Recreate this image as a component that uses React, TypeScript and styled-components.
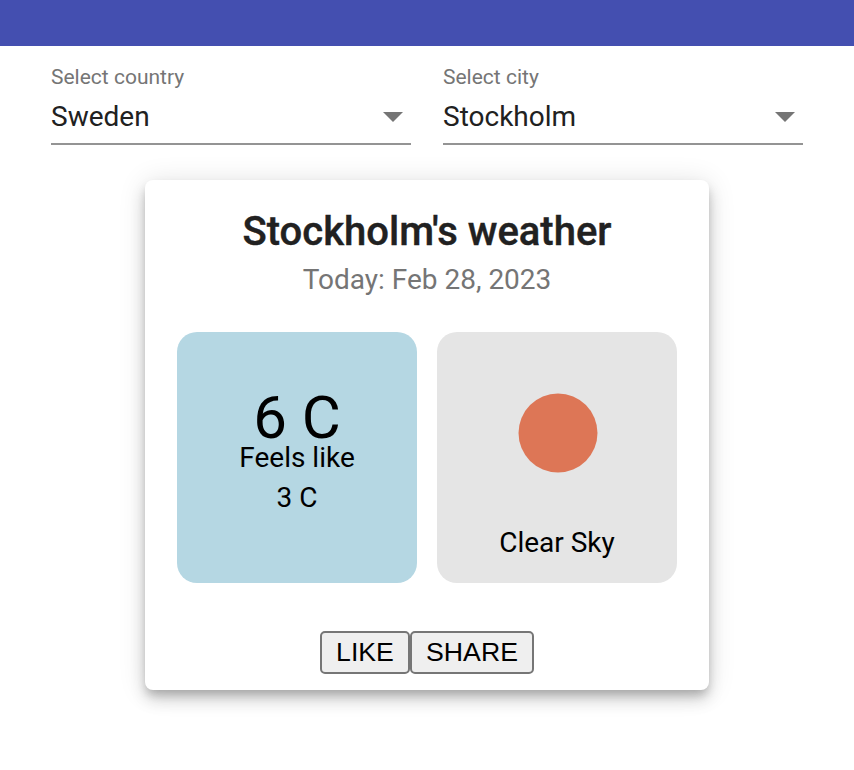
import React from "react";
import styled, { createGlobalStyle } from "styled-components";

const Global = createGlobalStyle`
  * { box-sizing: border-box; }
  body { margin: 0; background: #fff; font-family: Roboto, sans-serif; color: #000; }
`;
const Page = styled.main`
  height: 770px;
  overflow: hidden;
`;
const Toolbar = styled.header`
  height: 46px;
  background: #444fb0;
`;
const Filters = styled.div`
  display: flex;
  justify-content: center;
  gap: 32px;
  padding-top: 18px;
`;
const Field = styled.div`
  width: 360px;
  height: 81px;
  border-bottom: 2px solid #949494;
`;
const Label = styled.div`
  font-size: 21px;
  line-height: 26px;
  color: #757575;
`;
const Value = styled.div`
  display: flex;
  align-items: center;
  justify-content: space-between;
  padding-right: 8px;
  height: 52px;
  font-size: 28px;
  color: #212121;
`;
const Arrow = styled.svg`
  width: 20px;
  height: 10px;
  margin-top: 2px;
  fill: #757575;
`;
const Card = styled.section`
  width: 564px;
  height: 510px;
  margin: 35px auto 0;
  padding: 32px 32px 16px;
  border-radius: 8px;
  background: #fff;
  text-align: center;
  box-shadow: 0 6px 10px -2px rgba(0,0,0,.2), 0 10px 16px rgba(0,0,0,.14), 0 2px 28px rgba(0,0,0,.12);
`;
const Title = styled.h1`
  margin: 0;
  font-size: 40px;
  line-height: 40px;
  font-weight: 500;
  color: #212121;
  -webkit-text-stroke: 0.4px #212121;
`;
const Subtitle = styled.div`
  margin-top: 8px;
  font-size: 28px;
  line-height: 40px;
  color: #757575;
`;
const Tiles = styled.div`
  display: flex;
  gap: 20px;
  margin-top: 32px;
`;
const Tile = styled.div<{ $color: string }>`
  width: 240px;
  height: 251px;
  border-radius: 20px;
  background: ${(p) => p.$color};
  font-size: 28px;
  line-height: 40px;
`;
const Temperature = styled.div`
  padding-top: 66px;
  font-size: 60px;
  line-height: 40px;
`;
const Sun = styled.svg`
  display: block;
  width: 80px;
  height: 80px;
  margin: 61px auto 50px 81px;
`;
const Actions = styled.div`
  display: flex;
  justify-content: center;
  margin-top: 48px;
`;
const Button = styled.button<{ $width: number }>`
  width: ${(p) => p.$width}px;
  height: 43px;
  padding: 0;
  border: 2px solid #767676;
  border-radius: 5px;
  background: #efefef;
  color: #000;
  font: 26.67px "Liberation Sans", Arial, sans-serif;
`;

const Select = ({ label, value }: { label: string; value: string }) => (
  <Field>
    <Label>{label}</Label>
    <Value>
      {value}
      <Arrow viewBox="0 0 20 10"><path d="M0 0h20L10 10z" /></Arrow>
    </Value>
  </Field>
);

export default function App() {
  return (
    <Page>
      <Global />
      <Toolbar />
      <Filters>
        <Select label="Select country" value="Sweden" />
        <Select label="Select city" value="Stockholm" />
      </Filters>
      <Card>
        <Title>Stockholm's weather</Title>
        <Subtitle>Today: Feb 28, 2023</Subtitle>
        <Tiles>
          <Tile $color="#b5d7e3">
            <Temperature>6 C</Temperature>
            <div>Feels like</div>
            <div>3 C</div>
          </Tile>
          <Tile $color="#e5e5e5">
            <Sun viewBox="0 0 80 80"><circle cx="40" cy="40" r="39.5" fill="#dd7656" /></Sun>
            <div>Clear Sky</div>
          </Tile>
        </Tiles>
        <Actions>
          <Button $width={90}>LIKE</Button>
          <Button $width={124}>SHARE</Button>
        </Actions>
      </Card>
    </Page>
  );
}
